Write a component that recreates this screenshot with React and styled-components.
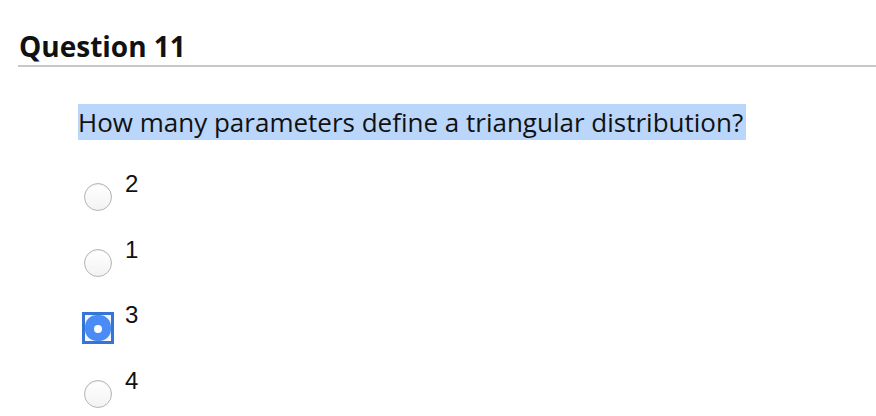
import React, { useState } from 'react';
import styled, { createGlobalStyle } from 'styled-components';

const GlobalStyle = createGlobalStyle`
  html, body {
    margin: 0;
    padding: 0;
    background: #ffffff;
  }
`;

const Page = styled.div`
  padding: 28px 0 0 18px;
  font-family: 'Open Sans', 'Liberation Sans', sans-serif;
  color: #111;
`;

const Heading = styled.h2`
  margin: 0;
  padding: 0 0 0 1px;
  font-size: 28px;
  font-weight: 700;
  line-height: 37px;
  border-bottom: 2px solid #c8c8c8;
`;

const QuestionText = styled.p`
  margin: 37px 0 0 60px;
  font-size: 26px;
  line-height: 36px;
`;

const Highlight = styled.span`
  background: #bad6fb;
  padding-right: 3px;
`;

const Options = styled.div`
  display: flex;
  flex-direction: column;
  margin: 31px 0 0 64px;
`;

const OptionRow = styled.label`
  display: flex;
  align-items: flex-start;
  height: 65.5px;
  cursor: pointer;
`;

const RadioBox = styled.span`
  width: 32px;
  height: 32px;
  margin-top: 10px;
  display: flex;
  align-items: center;
  justify-content: center;
  flex-shrink: 0;
`;

const Circle = styled.span`
  width: 28px;
  height: 28px;
  box-sizing: border-box;
  border-radius: 50%;
  border: 1px solid #b4b4b4;
  background: linear-gradient(#ffffff, #f3f3f3);
  box-shadow: inset 0 1px 1px rgba(0, 0, 0, 0.06);
`;

const Selected = styled.span`
  width: 32px;
  height: 32px;
  box-sizing: border-box;
  border: 3px solid #3475d6;
  background: #f2f6fe;
  display: flex;
  align-items: center;
  justify-content: center;

  &::before {
    content: '';
    width: 26px;
    height: 26px;
    border-radius: 45%;
    background: #4b8bf5;
    display: block;
    position: absolute;
  }
  &::after {
    content: '';
    width: 8px;
    height: 8px;
    margin-top: 2px;
    border-radius: 50%;
    background: #ffffff;
    display: block;
    position: relative;
  }
`;

const OptionLabel = styled.span`
  margin-left: 11px;
  font-family: 'Liberation Sans', Arial, sans-serif;
  font-size: 24px;
  line-height: 26px;
  color: #111;
`;

const answers = ['2', '1', '3', '4'];

export default function App() {
  const [value, setValue] = useState('3');

  return (
    <>
      <GlobalStyle />
      <Page>
        <Heading>Question 11</Heading>
        <QuestionText>
          <Highlight>How many parameters define a triangular distribution?</Highlight>
        </QuestionText>
        <Options>
          {answers.map(a => (
            <OptionRow key={a} onClick={() => setValue(a)}>
              <RadioBox>
                {value === a ? <Selected /> : <Circle />}
              </RadioBox>
              <OptionLabel>{a}</OptionLabel>
            </OptionRow>
          ))}
        </Options>
      </Page>
    </>
  );
}
